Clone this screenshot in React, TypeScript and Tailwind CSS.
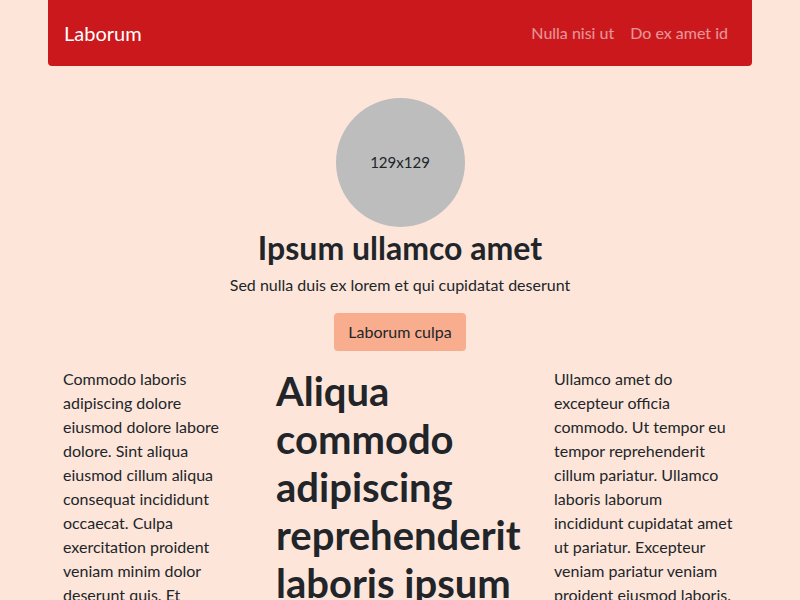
import React from "react";

const navLinks = ["Nulla nisi ut", "Do ex amet id"];

export default function App() {
  return (
    <div className="min-h-screen bg-[#fde5da] text-[#212529] font-['Lato','Liberation_Sans',sans-serif]">
      <div className="mx-auto w-[704px]">
        {/* NAVBAR */}
        <nav className="flex h-[66px] items-center justify-between rounded-b-[4px] bg-[#cb181d] px-4">
          <span className="text-[20px] text-white">Laborum</span>
          <div className="flex items-center gap-4 pr-2">
            {navLinks.map((l) => (
              <a key={l} className="text-[16px] text-white/55">
                {l}
              </a>
            ))}
          </div>
        </nav>

        {/* HERO */}
        <div className="flex flex-col items-center pt-8">
          <div className="flex h-[129px] w-[129px] items-center justify-center rounded-full bg-[#bdbdbd] text-[15px]">
            129x129
          </div>
          <h2 className="mt-[2px] text-[32px] leading-[38px] font-bold">Ipsum ullamco amet</h2>
          <p className="mt-[6px] text-[16px] leading-6">Sed nulla duis ex lorem et qui cupidatat deserunt</p>
          <button className="mt-4 h-[38px] rounded-[4px] bg-[#f9ad8f] px-[14px] text-[16px]">Laborum culpa</button>
        </div>

        {/* COLUMNS */}
        <div className="mt-[16px] flex px-[15px]">
          <p className="w-[177px] text-[16px] leading-6">
            Commodo laboris adipiscing dolore eiusmod dolore labore dolore. Sint aliqua eiusmod cillum aliqua consequat
            incididunt occaecat. Culpa exercitation proident veniam minim dolor deserunt quis. Et
          </p>
          <h1 className="ml-[36px] w-[254px] text-[40px] leading-[48px] font-bold">
            Aliqua commodo adipiscing reprehenderit laboris ipsum
          </h1>
          <p className="ml-[24px] w-[180px] text-[16px] leading-6">
            Ullamco amet do excepteur officia commodo. Ut tempor eu tempor reprehenderit cillum pariatur. Ullamco
            laboris laborum incididunt cupidatat amet ut pariatur. Excepteur veniam pariatur veniam proident eiusmod
            laboris.
          </p>
        </div>
      </div>
    </div>
  );
}
